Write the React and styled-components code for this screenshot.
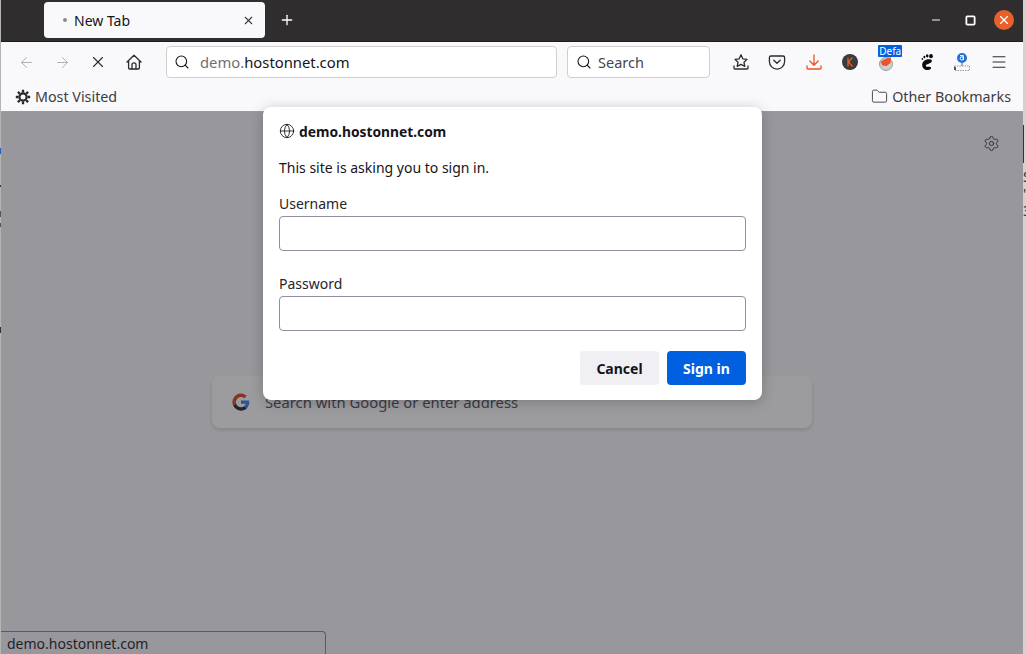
import React from "react";
import styled, { createGlobalStyle } from "styled-components";
import { ArrowLeft, ArrowRight, X, Search, Plus, Minus, Square, Menu, Folder, Globe, Settings } from "lucide-react";

const GlobalStyle = createGlobalStyle`
  html, body { margin: 0; padding: 0; height: 100%; overflow: hidden; }
  body { font-family: "Noto Sans", "Open Sans", sans-serif; color: #15141a; }
`;

const Screen = styled.div`
  display: flex;
  width: 1026px;
  height: 654px;
  background: #d6d6d6;
  overflow: hidden;
`;
const LeftEdge = styled.div`
  width: 1px;
  flex: none;
  padding-top: 148px;
  background: #b4b4b4;
`;
const EdgeMark = styled.div`
  width: 1px;
  height: ${(p) => p.$h}px;
  margin-bottom: ${(p) => p.$gap}px;
  background: ${(p) => p.$color};
`;
const RightEdge = styled.div`
  width: 3px;
  flex: none;
  padding-top: 125px;
  background: #d2d2d2;
  font-size: 14px;
  line-height: 17px;
  color: #333;
  overflow: hidden;
`;
const Window = styled.div`
  position: relative;
  flex: 1;
  display: flex;
  flex-direction: column;
  min-width: 0;
`;
const TabBar = styled.div`
  height: 39px;
  flex: none;
  display: flex;
  align-items: flex-start;
  padding: 2px 0 0 43px;
  background: #2f2d2e;
  border-bottom: 1px solid #1d1c1d;
  box-sizing: content-box;
`;
const Tab = styled.div`
  width: 221px;
  height: 36px;
  display: flex;
  align-items: center;
  padding: 0 10px 0 19px;
  box-sizing: border-box;
  background: #f9f9fb;
  border-radius: 4px;
  font-size: 14px;
`;
const TabDot = styled.span`
  width: 4px;
  height: 4px;
  margin-right: 7px;
  border-radius: 50%;
  background: #8a8a8f;
`;
const TabTitle = styled.span`
  flex: 1;
`;
const NewTab = styled.div`
  width: 44px;
  height: 36px;
  display: flex;
  align-items: center;
  justify-content: center;
  color: #fff;
`;
const WindowControls = styled.div`
  margin-left: auto;
  height: 36px;
  display: flex;
  align-items: center;
  gap: 14px;
  padding-right: 9px;
  color: #fff;
`;
const WindowButton = styled.div`
  width: 20px;
  height: 20px;
  display: flex;
  align-items: center;
  justify-content: center;
  border-radius: 50%;
  background: ${(p) => (p.$close ? "#e8602a" : "transparent")};
`;
const NavBar = styled.div`
  height: 42px;
  flex: none;
  display: flex;
  align-items: center;
  padding: 0 0 2px 7px;
  box-sizing: border-box;
  background: #f9f9fb;
  color: #2b2a33;
`;
const NavButton = styled.div`
  width: 36px;
  height: 32px;
  flex: none;
  display: flex;
  align-items: center;
  justify-content: center;
  color: ${(p) => (p.$off ? "#a9a9ae" : "#2b2a33")};
`;
const NavButtons = styled.div`
  display: flex;
  margin-right: 14px;
`;
const Field = styled.div`
  height: 32px;
  width: ${(p) => p.$w}px;
  flex: none;
  display: flex;
  align-items: center;
  gap: ${(p) => p.$gap}px;
  padding-left: ${(p) => p.$pad}px;
  margin-right: 10px;
  box-sizing: border-box;
  background: #fff;
  border: 1px solid #cfcfd3;
  border-radius: 4px;
  font-size: ${(p) => p.$size}px;
  color: #15141a;
`;
const Dim = styled.span`
  color: #6f6f75;
`;
const Muted = styled.span`
  color: #45454d;
`;
const Toolbar = styled.div`
  display: flex;
  margin-left: 3px;
`;
const ToolButton = styled.div`
  position: relative;
  width: 36.3px;
  height: 32px;
  flex: none;
  margin-left: ${(p) => p.$shift || 0}px;
  display: flex;
  align-items: center;
  justify-content: center;
`;
const Badge = styled.span`
  position: absolute;
  left: 10px;
  top: -1px;
  width: 24px;
  height: 12px;
  background: #0060df;
  color: #fff;
  font-size: 10px;
  line-height: 12px;
  text-align: center;
  border-radius: 1px;
`;
const BookmarkBar = styled.div`
  height: 25px;
  flex: none;
  display: flex;
  align-items: center;
  justify-content: space-between;
  padding: 0 12px 2px 14px;
  box-sizing: content-box;
  background: #f9f9fb;
  border-bottom: 1px solid #9b9b9b;
  font-size: 14.3px;
  color: #3c3c42;
`;
const Bookmark = styled.div`
  display: flex;
  align-items: center;
  gap: 4px;
`;
const Content = styled.main`
  position: relative;
  flex: 1;
  display: flex;
  flex-direction: column;
  align-items: center;
  padding-top: 264px;
  background: #f9f9fb;
`;
const GearLink = styled.div`
  position: absolute;
  top: 23px;
  right: 23px;
  display: flex;
  color: #3a3a40;
`;
const HomeSearch = styled.div`
  width: 600px;
  height: 52px;
  display: flex;
  align-items: center;
  gap: 15px;
  padding-left: 20px;
  box-sizing: border-box;
  background: #fff;
  border-radius: 8px;
  box-shadow: 0 2px 4px rgba(0, 0, 0, 0.14);
  font-size: 14.8px;
  color: #5b5b66;
`;
const StatusBar = styled.div`
  position: absolute;
  left: 0;
  bottom: 0;
  width: 318px;
  height: 22px;
  padding-left: 6px;
  box-sizing: content-box;
  background: #f9f9fb;
  border-top: 1px solid #8f8f8f;
  border-right: 1px solid #8f8f8f;
  border-top-right-radius: 4px;
  font-size: 14px;
  line-height: 23px;
  color: #303035;
`;
const Backdrop = styled.div`
  position: absolute;
  inset: 0;
  background: rgba(18, 17, 24, 0.42);
`;
const Dialog = styled.form`
  position: absolute;
  left: 262px;
  top: 107px;
  width: 499px;
  height: 293px;
  padding: 15px 16px 16px;
  box-sizing: border-box;
  background: #fff;
  border-radius: 8px;
  box-shadow: 0 2px 14px rgba(0, 0, 0, 0.22);
  font-size: 14px;
`;
const DialogHost = styled.div`
  display: flex;
  align-items: center;
  gap: 4px;
  height: 18px;
  font-size: 13.8px;
  font-weight: 700;
`;
const DialogText = styled.p`
  margin: 18px 0 0;
  height: 19px;
  line-height: 19px;
`;
const FieldLabel = styled.label`
  display: block;
  height: 19px;
  line-height: 19px;
  margin: ${(p) => p.$top}px 0 3px;
  color: #26252b;
`;
const TextInput = styled.input`
  display: block;
  width: 100%;
  height: 35px;
  box-sizing: border-box;
  border: 1px solid #8f8f9d;
  border-radius: 4px;
  background: #fff;
`;
const DialogActions = styled.div`
  display: flex;
  justify-content: flex-end;
  gap: 8px;
  margin-top: 20px;
`;
const ActionButton = styled.button`
  width: 79px;
  height: 34px;
  padding: 0;
  border: 0;
  border-radius: 4px;
  font-family: inherit;
  font-size: 14px;
  font-weight: 700;
  background: ${(p) => (p.$primary ? "#0060df" : "#f0f0f4")};
  color: ${(p) => (p.$primary ? "#fff" : "#15141a")};
`;

const strokeIcon = {
  width: 18,
  height: 18,
  viewBox: "0 0 18 18",
  fill: "none",
  stroke: "currentColor",
  strokeWidth: 1.3,
  strokeLinecap: "round",
  strokeLinejoin: "round",
};

const HomeIcon = () => (
  <svg {...strokeIcon}>
    <path d="M2 9 9 2.3 16 9M3.6 7.6V15a1 1 0 0 0 1 1h8.800a1 1 0 0 0 1-1V7.600" />
    <path d="M7 16v-4.200a2 2 0 0 1 4 0V16" />
  </svg>
);

const SaveStarIcon = () => (
  <svg {...strokeIcon}>
    <path d="M9 1.800 10.900 5.900 15 6.400 12 9.300 12.800 13.400 9 11.400 5.200 13.400 6 9.300 3 6.400 7.100 5.900Z" />
    <path d="M2 13v2.200a.8.8 0 0 0 .8.8h12.400a.8.8 0 0 0 .8-.8V13" />
  </svg>
);

const PocketIcon = () => (
  <svg {...strokeIcon}>
    <path d="M3 3h12a1.600 1.600 0 0 1 1.600 1.600V8.500a7.600 7.600 0 0 1-15.200 0V4.600A1.600 1.600 0 0 1 3 3Z" />
    <path d="M5.800 7.200 9 10.200l3.200-3" />
  </svg>
);

const DownloadIcon = () => (
  <svg {...strokeIcon} stroke="#e95420">
    <path d="M9 2v10M4.800 8 9 12.200 13.200 8" />
    <path d="M2 13v2.200a.8.8 0 0 0 .8.8h12.400a.8.8 0 0 0 .8-.8V13" />
  </svg>
);

const KeepIcon = () => (
  <svg width="16" height="16" viewBox="0 0 16 16">
    <circle cx="8" cy="8" r="8" fill="#3b3b3d" />
    <path d="M6 3.500v9M10.500 3.500 6.400 8l4.200 4.500" fill="none" stroke="#e0622c" strokeWidth="1.300" />
  </svg>
);

const FoxIcon = () => (
  <svg width="18" height="18" viewBox="0 0 18 18">
    <circle cx="9" cy="11" r="6.500" fill="#cfcfcf" stroke="#9b9b9b" />
    <path d="M3.500 9 7 6.500l7-2.500-.5 6-4 3-4-.5Z" fill="#e9552b" />
  </svg>
);

const GnomeIcon = () => (
  <svg width="16" height="17" viewBox="0 0 16 17" fill="#0c0c0c">
    <ellipse cx="13" cy="2.200" rx="1.900" ry="2.100" />
    <ellipse cx="9.200" cy="1.800" rx="1.300" ry="1.600" />
    <ellipse cx="6.400" cy="3" rx="1" ry="1.300" />
    <ellipse cx="4.400" cy="5" rx=".8" ry="1.100" />
    <path d="M12.600 5.400c-3.400-.6-8 .9-8.400 5-.3 3.400 2.700 6 5.800 5.700 1.900-.2 3.200-1.400 3.100-2.400-.1-1-1.500-1.200-3-1-1.400.2-2.400-.3-2.300-1.200.1-1 1.400-1.200 2.500-1.600 1.500-.6 3.500-1.200 3.600-2.800.1-.9-.5-1.500-1.300-1.700Z" />
  </svg>
);

const TranslateIcon = () => (
  <svg width="18" height="20" viewBox="0 0 18 20">
    <circle cx="9" cy="6" r="5" fill="#1f6fd6" />
    <circle cx="8.800" cy="6.400" r="1.600" fill="none" stroke="#fff" strokeWidth="1" />
    <path d="M7 3.600h3.400v4.500" fill="none" stroke="#fff" strokeWidth="1" />
    <path d="M9 11v3" stroke="#5a5a5a" />
    <path d="M1.500 14h15v4.500h-15Z" fill="none" stroke="#9a9a9a" strokeDasharray="1.500 1" />
    <path d="M1 15h2v3H1Z" fill="#1f5fb8" />
  </svg>
);

const GearFilled = () => (
  <svg width="16" height="16" viewBox="0 0 16 16" fill="none" stroke="#26252b">
    <circle cx="8" cy="8" r="3.600" strokeWidth="2.200" />
    <path
      d="M8 .8v2.600M8 12.600v2.600M.8 8h2.600M12.600 8h2.600M2.900 2.900l1.900 1.900M11.200 11.200l1.900 1.900M2.900 13.100l1.900-1.900M11.200 4.800l1.900-1.900"
      strokeWidth="2.300"
    />
  </svg>
);

const GoogleIcon = () => (
  <svg width="18" height="18" viewBox="0 0 48 48">
    <path fill="#4285f4" d="M46 24.500c0-1.600-.1-3.100-.4-4.500H24v8.700h12.400c-.5 2.900-2.200 5.300-4.600 6.900v5.700h7.400C43.500 36.400 46 31 46 24.500Z" />
    <path fill="#34322f" d="M24 47c6.200 0 11.400-2 15.200-5.600l-7.400-5.700c-2 1.400-4.700 2.200-7.800 2.200-6 0-11-4-12.800-9.500H3.500v5.900C7.300 41.800 15 47 24 47Z" />
    <path fill="#d4553a" d="M11.200 28.900a13.800 13.800 0 0 1 0-8.800v-5.900H3.500a23 23 0 0 0 0 20.600Z" />
    <path fill="#e2492f" d="M24 10.600c3.400 0 6.400 1.200 8.800 3.400l6.600-6.600C35.400 3.700 30.200 1 24 1 15 1 7.300 6.200 3.500 14.200l7.700 5.900C13 14.600 18 10.600 24 10.600Z" />
  </svg>
);

const leftMarks = [
  { h: 6, gap: 31, color: "#2a62c0" },
  { h: 2, gap: 24, color: "#3a3a3a" },
  { h: 6, gap: 6, color: "#555" },
  { h: 4, gap: 100, color: "#555" },
  { h: 6, gap: 8, color: "#333" },
];

export default function App() {
  return (
    <Screen>
      <GlobalStyle />
      <LeftEdge>
        {leftMarks.map((m, i) => (
          <EdgeMark key={i} $h={m.h} $gap={m.gap} $color={m.color} />
        ))}
      </LeftEdge>
      <Window>
        <TabBar>
          <Tab>
            <TabDot />
            <TabTitle>New Tab</TabTitle>
            <X size={13} color="#3a3a40" />
          </Tab>
          <NewTab>
            <Plus size={16} />
          </NewTab>
          <WindowControls>
            <WindowButton>
              <Minus size={12} />
            </WindowButton>
            <WindowButton>
              <Square size={11} strokeWidth={1.8} absoluteStrokeWidth />
            </WindowButton>
            <WindowButton $close>
              <X size={14} />
            </WindowButton>
          </WindowControls>
        </TabBar>
        <NavBar>
          <NavButtons>
            <NavButton $off>
              <ArrowLeft size={17} strokeWidth={1.3} />
            </NavButton>
            <NavButton $off>
              <ArrowRight size={17} strokeWidth={1.3} />
            </NavButton>
            <NavButton>
              <X size={18} strokeWidth={1.5} />
            </NavButton>
            <NavButton>
              <HomeIcon />
            </NavButton>
          </NavButtons>
          <Field $w={391} $size={14.8} $gap={10} $pad={7}>
            <Search size={16} strokeWidth={1.6} />
            <span>
              <Dim>demo.</Dim>hostonnet.com
            </span>
          </Field>
          <Field $w={143} $size={14.5} $gap={6} $pad={8}>
            <Search size={16} strokeWidth={1.6} />
            <Muted>Search</Muted>
          </Field>
          <Toolbar>
            <ToolButton>
              <SaveStarIcon />
            </ToolButton>
            <ToolButton>
              <PocketIcon />
            </ToolButton>
            <ToolButton>
              <DownloadIcon />
            </ToolButton>
            <ToolButton>
              <KeepIcon />
            </ToolButton>
            <ToolButton>
              <FoxIcon />
              <Badge>Defa</Badge>
            </ToolButton>
            <ToolButton $shift={3.5}>
              <GnomeIcon />
            </ToolButton>
            <ToolButton>
              <TranslateIcon />
            </ToolButton>
            <ToolButton>
              <Menu size={18} strokeWidth={1.4} />
            </ToolButton>
          </Toolbar>
        </NavBar>
        <BookmarkBar>
          <Bookmark>
            <GearFilled />
            Most Visited
          </Bookmark>
          <Bookmark>
            <Folder size={17} strokeWidth={1.3} />
            Other Bookmarks
          </Bookmark>
        </BookmarkBar>
        <Content>
          <GearLink>
            <Settings size={17} strokeWidth={1.3} />
          </GearLink>
          <HomeSearch>
            <GoogleIcon />
            Search with Google or enter address
          </HomeSearch>
          <StatusBar>demo.hostonnet.com</StatusBar>
          <Backdrop />
        </Content>
        <Dialog onSubmit={(e) => e.preventDefault()}>
          <DialogHost>
            <Globe size={16} strokeWidth={1.3} />
            demo.hostonnet.com
          </DialogHost>
          <DialogText>This site is asking you to sign in.</DialogText>
          <FieldLabel $top={17}>Username</FieldLabel>
          <TextInput type="text" />
          <FieldLabel $top={23}>Password</FieldLabel>
          <TextInput type="password" />
          <DialogActions>
            <ActionButton type="button">Cancel</ActionButton>
            <ActionButton $primary>Sign in</ActionButton>
          </DialogActions>
        </Dialog>
      </Window>
      <RightEdge>
        <EdgeMark $h={38} $gap={5} $color="#333" />
        S
        <br />'
        <br />3
      </RightEdge>
    </Screen>
  );
}
